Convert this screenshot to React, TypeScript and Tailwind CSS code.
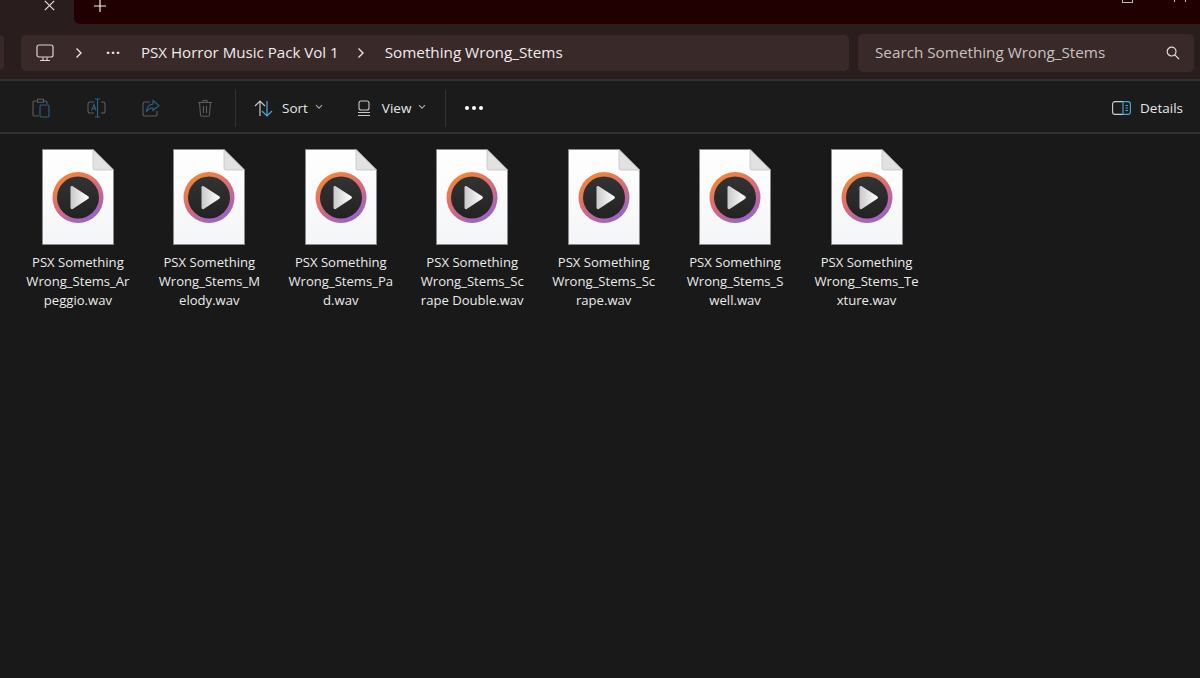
import React from "react";

const font = { fontFamily: '"Open Sans", "Noto Sans", sans-serif' };

function Chevron() {
  return (
    <svg width="8" height="12" viewBox="0 0 8 12" fill="none" stroke="#e8e2e2" strokeWidth="1.4">
      <path d="M1.5 1.5 6 6l-4.5 4.5" />
    </svg>
  );
}

function Small() {
  return (
    <svg width="8" height="6" viewBox="0 0 8 6" fill="none" stroke="#a8a8a8" strokeWidth="1.1">
      <path d="M1 1.2 4 4.2l3-3" />
    </svg>
  );
}

function FileIcon({ id }: { id: string }) {
  return (
    <svg width="72" height="96" viewBox="0 0 72 96" className="block">
      <defs>
        <linearGradient id={`r${id}`} x1="0.2" y1="0" x2="0.8" y2="1">
          <stop offset="0" stopColor="#f68b2c" />
          <stop offset="0.5" stopColor="#d9697a" />
          <stop offset="1" stopColor="#8d62d8" />
        </linearGradient>
        <linearGradient id={`p${id}`} x1="0" y1="0" x2="1" y2="0">
          <stop offset="0" stopColor="#c9c9c9" />
          <stop offset="1" stopColor="#ffffff" />
        </linearGradient>
        <linearGradient id={`f${id}`} x1="0" y1="0" x2="0" y2="1">
          <stop offset="0" stopColor="#ffffff" />
          <stop offset="1" stopColor="#f4f5f8" />
        </linearGradient>
        <linearGradient id={`d${id}`} x1="0" y1="0" x2="0" y2="1">
          <stop offset="0" stopColor="#333333" />
          <stop offset="1" stopColor="#222222" />
        </linearGradient>
      </defs>
      <path d="M.5.5H51L71.5 21v74.5H.5z" fill={`url(#f${id})`} stroke="#8a8a8a" strokeWidth="1" />
      <path d="M51 .5 71.5 21H53a2 2 0 0 1-2-2z" fill="#e2e2e2" stroke="#bdbdbd" strokeWidth="0.7" />
      <circle cx="36" cy="48.500" r="25.500" fill={`url(#r${id})`} />
      <circle cx="36" cy="48.500" r="21" fill={`url(#d${id})`} />
      <path d="M28.500 38.500c0-1.200 1.200-1.800 2.200-1.200l15.500 9.900c.9.700.9 2 0 2.600L30.700 60c-1 .6-2.200 0-2.200-1.200z" fill={`url(#p${id})`} />
    </svg>
  );
}

const files = [
  ["PSX Something", "Wrong_Stems_Ar", "peggio.wav"],
  ["PSX Something", "Wrong_Stems_M", "elody.wav"],
  ["PSX Something", "Wrong_Stems_Pa", "d.wav"],
  ["PSX Something", "Wrong_Stems_Sc", "rape Double.wav"],
  ["PSX Something", "Wrong_Stems_Sc", "rape.wav"],
  ["PSX Something", "Wrong_Stems_S", "well.wav"],
  ["PSX Something", "Wrong_Stems_Te", "xture.wav"],
];

export default function App() {
  return (
    <div className="flex h-[678px] w-[1200px] flex-col overflow-hidden bg-[#191919]" style={font}>
      <div className="flex h-[24px] bg-[#2a1d1d]">
        <div className="relative w-[74px] shrink-0">
          <svg className="absolute left-[44px] top-0" width="11" height="11" viewBox="0 0 11 11" fill="none" stroke="#e6e0e0" strokeWidth="1.2">
            <path d="M.8.8l9.4 9.4M10.2.8.8 10.2" />
          </svg>
        </div>
        <div className="relative flex-1 rounded-bl-[6px] bg-[#210002]">
          <svg className="absolute left-[20px] top-0" width="12" height="12" viewBox="0 0 12 12" fill="none" stroke="#eee" strokeWidth="1.2">
            <path d="M6 0v12M0 6h12" />
          </svg>
          <div className="absolute left-[1048px] top-0 h-[3px] w-[11px] border-x border-b border-[#bbb]" />
          <div className="absolute left-[1100px] top-0 h-[2px] w-[12px] border-x border-[#bbb]" />
        </div>
      </div>

      <div className="flex h-[55px] items-center gap-[9px] bg-[#2a1d1d] pt-[2px]">
        <div className="ml-[-14px] h-[35px] w-[18px] rounded-[4px] bg-[#392929]" />
        <div className="ml-[8px] flex h-[36px] w-[828px] items-center rounded-[5px] bg-[#392929] text-[#f0ecec]">
          <svg className="ml-[15px]" width="18" height="18" viewBox="0 0 18 18" fill="none" stroke="#dcd6d6" strokeWidth="1.2">
            <rect x="1" y="1" width="16" height="12" rx="2" />
            <path d="M4 16.500h10M7 13.500v3M11 13.500v3" />
          </svg>
          <span className="ml-[21px]"><Chevron /></span>
          <span className="ml-[23px] mt-[-8px] text-[14px] font-bold leading-none tracking-[1px]">...</span>
          <span className="ml-[20px] whitespace-nowrap text-[15.100px]">PSX Horror Music Pack Vol 1</span>
          <span className="ml-[18px]"><Chevron /></span>
          <span className="ml-[20px] whitespace-nowrap text-[15.250px]">Something Wrong_Stems</span>
        </div>
        <div className="flex h-[38px] w-[336px] items-center justify-between rounded-[5px] bg-[#392929] pl-[17px] pr-[14px] text-[15.250px] text-[#c9c2c2]">
          <span>Search Something Wrong_Stems</span>
          <svg width="14" height="14" viewBox="0 0 14 14" fill="none" stroke="#ddd" strokeWidth="1.2">
            <circle cx="5.600" cy="5.600" r="4.400" />
            <path d="M8.800 8.800 13 13" />
          </svg>
        </div>
      </div>

      <div className="flex h-[55px] items-center border-y-2 border-[#303030] bg-[#1b1b1b] pt-[3px] text-[13.500px] text-[#e6e6e6]">
        <div className="ml-[32px] flex w-[181px] items-center justify-between">
          <svg width="18" height="20" viewBox="0 0 18 20" fill="none" strokeWidth="1.1">
            <path d="M6 3H2.500A1.500 1.500 0 0 0 1 4.500v12A1.500 1.500 0 0 0 2.500 18H7" stroke="#5c5c5c" />
            <path d="M5.500 1.200h6v3h-6zM12 3h1.500A1.500 1.500 0 0 1 15 4.500V6" stroke="#5c5c5c" />
            <rect x="8" y="7" width="9" height="12" rx="1.500" stroke="#2a6485" />
          </svg>
          <svg width="19" height="20" viewBox="0 0 19 20" fill="none" strokeWidth="1.1">
            <path d="M7 4H3a2 2 0 0 0-2 2v7a2 2 0 0 0 2 2h4M14 4h2a2 2 0 0 1 2 2v7a2 2 0 0 1-2 2h-2" stroke="#5c5c5c" />
            <path d="M10.500 1v18M8 1h5M8 19h5M4.500 12.500 7 6.500l2 6M5.200 10.800h3.200" stroke="#2a6485" />
          </svg>
          <svg width="18" height="18" viewBox="0 0 18 18" fill="none" strokeWidth="1.1">
            <path d="M8 3H3a2 2 0 0 0-2 2v10a2 2 0 0 0 2 2h10a2 2 0 0 0 2-2v-3" stroke="#5c5c5c" />
            <path d="M11 1.500 17 6.500l-6 5V9C8 9 6 10 4.500 13c.3-4.500 2.500-7.500 6.500-8z" stroke="#2a6485" />
          </svg>
          <svg width="16" height="18" viewBox="0 0 16 18" fill="none" stroke="#5c5c5c" strokeWidth="1.1">
            <path d="M1 3.500h14M6 3.500V1.500h4v2M2.500 3.500l1 12.500a1.500 1.500 0 0 0 1.500 1.200h6a1.500 1.500 0 0 0 1.500-1.200l1-12.500M6.500 7v7M9.500 7v7" />
          </svg>
        </div>
        <div className="ml-[22px] h-[37px] w-px bg-[#333]" />
        <svg className="ml-[18px]" width="19" height="17" viewBox="0 0 19 17" fill="none" strokeWidth="1.2">
          <path d="M6 16V1M1 6l5-5 5 5" stroke="#c9c9c9" />
          <path d="M13 1v15M8 11l5 5 5-5" stroke="#4aa8dc" />
        </svg>
        <span className="ml-[9px]">Sort</span>
        <span className="ml-[7px] mt-[-2px]"><Small /></span>
        <svg className="ml-[34px]" width="14" height="17" viewBox="0 0 14 17" fill="none" stroke="#c9c9c9" strokeWidth="1.1">
          <rect x="2" y="1" width="10" height="9" rx="2" />
          <path d="M1 12.500h12M1 15.500h12" />
        </svg>
        <span className="ml-[11px]">View</span>
        <span className="ml-[7px] mt-[-2px]"><Small /></span>
        <div className="ml-[19px] h-[37px] w-px bg-[#333]" />
        <div className="ml-[19px] flex gap-[3px]">
          <span className="size-[4px] rounded-full bg-white" />
          <span className="size-[4px] rounded-full bg-white" />
          <span className="size-[4px] rounded-full bg-white" />
        </div>
        <svg className="ml-auto" width="19" height="14" viewBox="0 0 19 14" fill="none" strokeWidth="1.1">
          <path d="M11 .6H3A2.400 2.400 0 0 0 .6 3v8A2.400 2.400 0 0 0 3 13.400h8" stroke="#cfcfcf" />
          <path d="M11 .6h5A2.400 2.400 0 0 1 18.400 3v8a2.400 2.400 0 0 1-2.400 2.400h-5zM13.500 4.500h2.500M13.500 7h2.500M13.500 9.500h2.500" stroke="#4aa8dc" />
        </svg>
        <span className="ml-[9px] mr-[17px]">Details</span>
      </div>

      <div className="flex flex-1 bg-[#191919] pl-[12.200px] pt-[15px]">
        {files.map((lines, i) => (
          <div key={i} className="flex w-[131.450px] shrink-0 flex-col items-center">
            <FileIcon id={String(i)} />
            <div className="mt-[8px] w-full whitespace-nowrap text-center text-[13.100px] leading-[19px] text-[#ebebeb]">
              {lines.map((l) => (
                <div key={l}>{l}</div>
              ))}
            </div>
          </div>
        ))}
      </div>
    </div>
  );
}
